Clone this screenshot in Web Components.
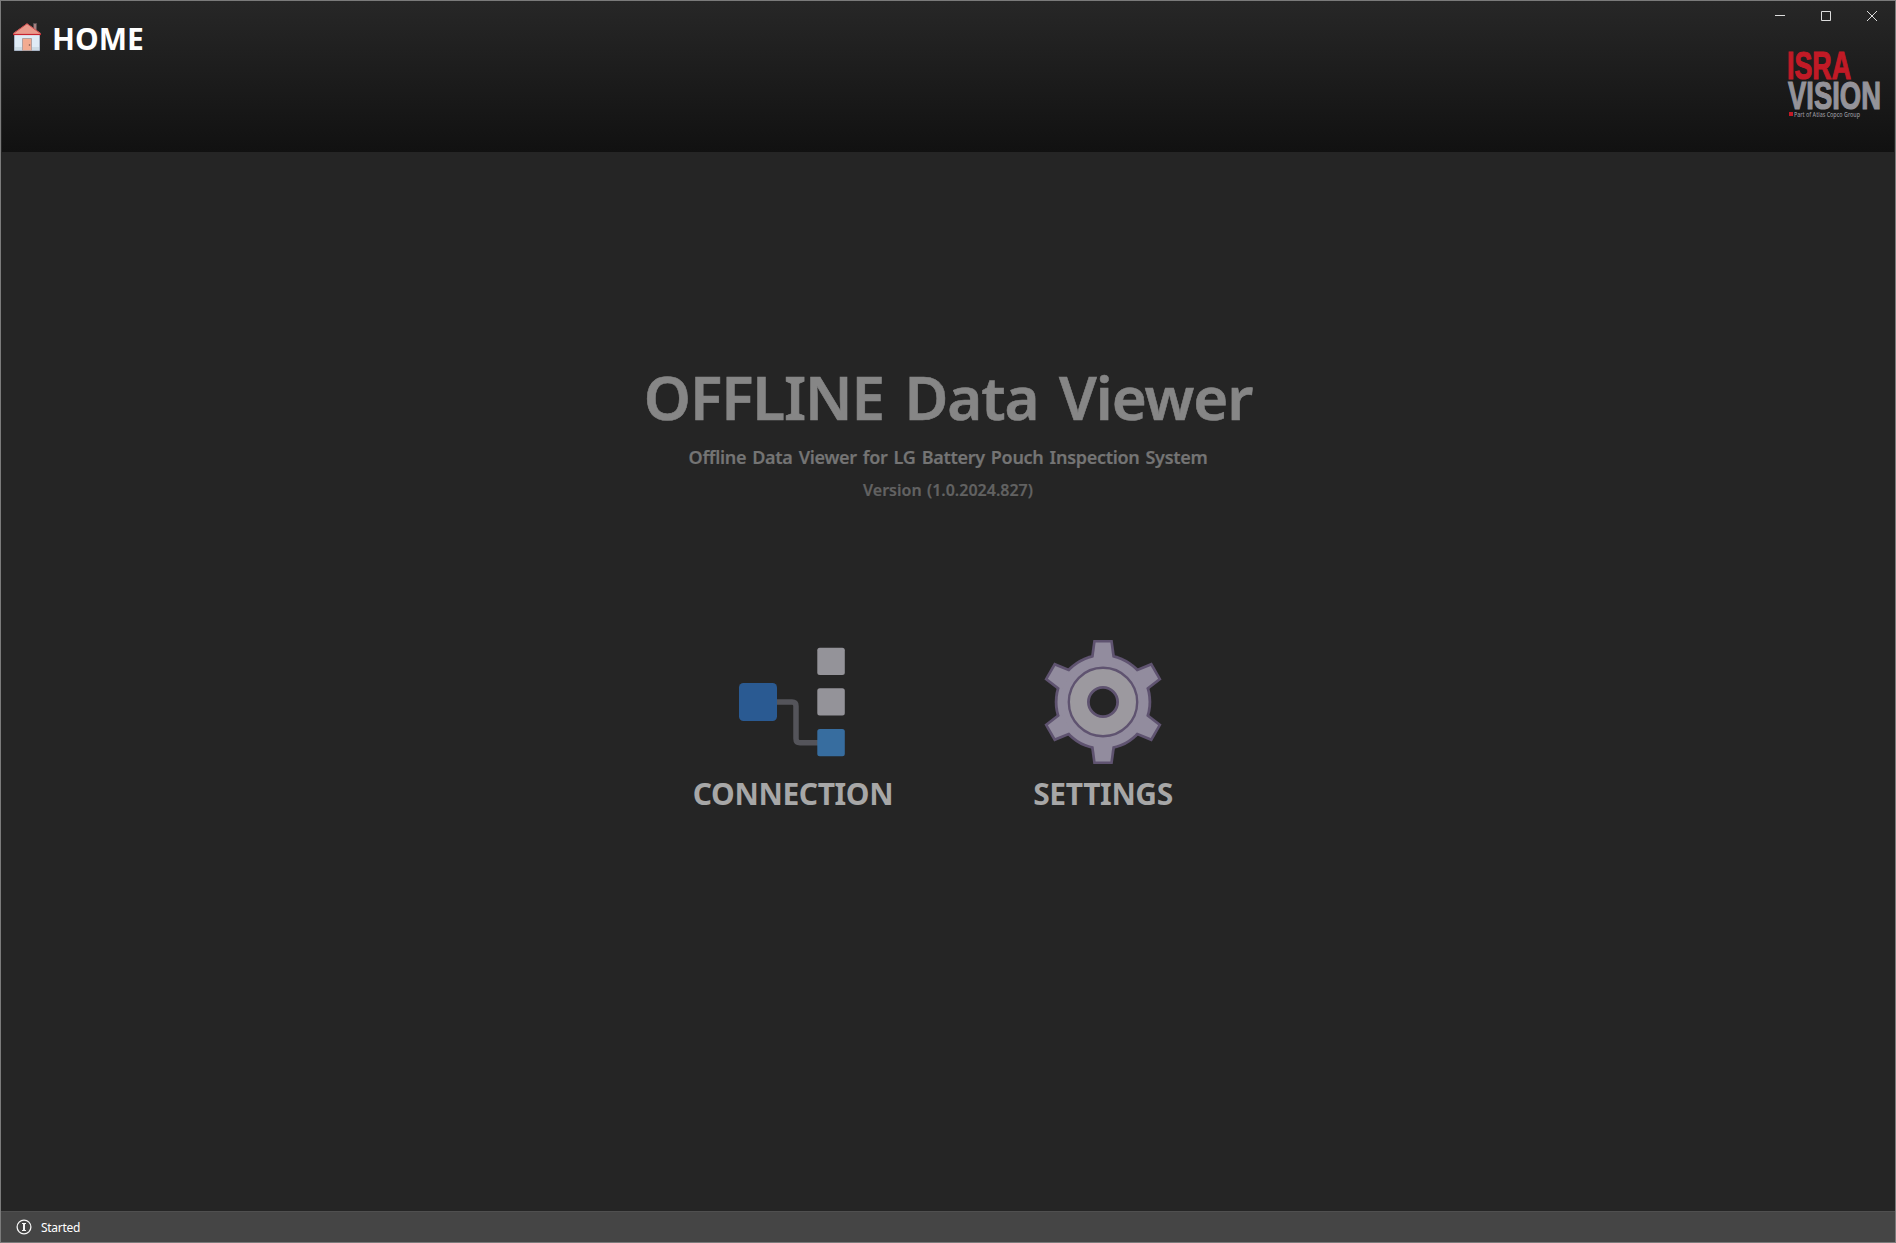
<!DOCTYPE html>
<html lang="en"><head><meta charset="utf-8"><title>OFFLINE Data Viewer</title>
<style>
html,body{margin:0;height:100%;background:#252525}
body{font-family:"Noto Sans","Open Sans",sans-serif;overflow:hidden}
</style></head><body>
<app-window>
  <app-header slot="header" heading="HOME"></app-header>
  <app-intro>
    <span slot="title">OFFLINE Data Viewer</span>
    <span slot="subtitle">Offline Data Viewer for LG Battery Pouch Inspection System</span>
    <span slot="version">Version (1.0.2024.827)</span>
  </app-intro>
  <app-menu>
    <menu-tile><icon-connection slot="icon"></icon-connection>CONNECTION</menu-tile>
    <menu-tile><icon-gear slot="icon"></icon-gear>SETTINGS</menu-tile>
  </app-menu>
  <app-status slot="status">Started</app-status>
</app-window>
<script>
const define=(name,html)=>customElements.define(name,class extends HTMLElement{
  constructor(){super();const t=document.createElement('template');t.innerHTML=html;
    this.attachShadow({mode:'open'}).appendChild(t.content.cloneNode(true));}
  connectedCallback(){const h=this.shadowRoot.querySelector('[data-heading]');
    if(h)h.textContent=this.getAttribute('heading')||'';}
});
define('icon-home',`<style>:host{display:block;width:30px;height:30px}svg{display:block}</style>
<svg width="30" height="30" viewBox="0 0 30 30">
<path d="M21.500 8V1.500h3V11" fill="#a57f7f" stroke="#5d5254"/>
<path d="M2.500 12h25v16.500h-25z" fill="#dfebf5" stroke="#a9b5c6"/>
<path d="M3 25h24v3H3z" fill="#ccdbe4"/>
<path d="M10.500 28.500V16.500h9v12z" fill="#f3ab90" stroke="#b3a09f"/>
<circle cx="17.500" cy="23" r=".8" fill="#77564f"/>
<path d="M1.500 12.500V11L15 1.500 28.500 11v1.500z" fill="#e99a8c"/>
<path d="M1.500 11.500 15 1.700l13.500 9.800" fill="none" stroke="#c9494b"/>
<path d="M1 12.500h28" stroke="#c8232f" stroke-width="1.200"/></svg>`);
define('window-controls',`<style>:host{display:flex;gap:36px;height:10px}svg{display:block}</style>
<svg width="10" height="10"><path d="M0 4.500h10" stroke="#dcdcdc"/></svg>
<svg width="10" height="10"><path d="M.5.5h9v9h-9z" fill="none" stroke="#dcdcdc"/></svg>
<svg width="10" height="10"><path d="M0 0l10 10M10 0L0 10" stroke="#dcdcdc"/></svg>`);
define('brand-logo',`<style>:host{display:block;width:96px;height:68px}svg{display:block;overflow:visible}
text{font-family:"Liberation Sans Narrow","Liberation Sans",sans-serif;font-weight:700}
.s{font-family:"Noto Sans",sans-serif;font-weight:500}</style>
<svg width="96" height="68" viewBox="0 0 96 68">
<text x="-1" y="27.500" font-size="39" textLength="64" lengthAdjust="spacingAndGlyphs" fill="#c11a26" stroke="#c11a26" stroke-width="1.200">ISRA</text>
<text x="0" y="57.500" font-size="39" textLength="93" lengthAdjust="spacingAndGlyphs" fill="#949399" stroke="#949399" stroke-width="1.200">VISION</text>
<path d="M1 61h4v4H1z" fill="#c11a26"/>
<text class="s" x="6" y="65.500" font-size="6.200" textLength="66" lengthAdjust="spacingAndGlyphs" fill="#949399">Part of Atlas Copco Group</text></svg>`);
define('app-header',`<style>:host{display:flex;justify-content:space-between;height:151px;box-sizing:border-box;margin:0 1px;background:linear-gradient(#272727,#111)}
.l{display:flex;gap:10px;padding:21px 0 0 10px;align-items:flex-start}
.h{font-weight:700;font-size:30px;line-height:34px;color:#fff}
.r{display:flex;flex-direction:column;align-items:flex-end;padding-top:10px}
window-controls{margin-right:17px}brand-logo{margin:30px 10px 0 0}</style>
<div class="l"><icon-home></icon-home><div class="h" data-heading></div></div>
<div class="r"><window-controls></window-controls><brand-logo></brand-logo></div>`);
define('app-intro',`<style>:host{display:flex;flex-direction:column;align-items:center;font-weight:600;white-space:nowrap}
.t{margin-top:205px;font-size:60px;line-height:80px;letter-spacing:-1.1px;word-spacing:6px;color:#868686;-webkit-text-stroke:.6px #868686}
.s{margin-top:8px;font-size:18px;line-height:24px;letter-spacing:-.3px;word-spacing:1.700px;color:#747474;-webkit-text-stroke:.2px #747474}
.v{margin-top:9px;font-size:16px;line-height:24px;word-spacing:1.200px;color:#626262;-webkit-text-stroke:.2px #626262}</style>
<div class="t"><slot name="title"></slot></div><div class="s"><slot name="subtitle"></slot></div><div class="v"><slot name="version"></slot></div>`);
define('app-menu',`<style>:host{display:flex;justify-content:center;gap:108px;margin-top:136px}</style><slot></slot>`);
define('menu-tile',`<style>:host{display:flex;flex-direction:column;align-items:center;width:202px}
.n{margin-top:8px;font-weight:700;font-size:30px;line-height:40px;letter-spacing:-.4px;color:#a7a7a7}</style><slot name="icon"></slot><div class="n"><slot></slot></div>`);
define('icon-connection',`<style>:host{display:block}svg{display:block}</style>
<svg width="128" height="128" viewBox="0 0 128 128">
<path d="M47 64h16q4 0 4 4v32.700q0 4 4 4h18" fill="none" stroke="#54545a" stroke-width="5.500"/>
<rect x="10" y="45" width="38" height="38" rx="4.500" fill="#2a5a92"/>
<g fill="#949399"><rect x="88.300" y="9.700" width="27.500" height="27.300" rx="2.500"/><rect x="88.300" y="50.300" width="27.500" height="27.300" rx="2.500"/></g>
<rect x="88.300" y="91" width="27.500" height="27.300" rx="2.500" fill="#376d9f"/></svg>`);
define('icon-gear',`<style>:host{display:block}svg{display:block}</style>
<svg width="128" height="128" viewBox="-64 -64 128 128">
<defs><path id="o" d="M-12.500-42 -9.700-62H9.700L12.500-42z"/><path id="i" d="M-9.700-42 -7.400-59.400H7.400L9.700-42z"/></defs>
<g fill="#5f5370"><circle r="48.300"/><use href="#o"/><use href="#o" transform="rotate(60)"/><use href="#o" transform="rotate(120)"/><use href="#o" transform="rotate(180)"/><use href="#o" transform="rotate(240)"/><use href="#o" transform="rotate(300)"/></g>
<g fill="#928c9e"><circle r="45.500"/><use href="#i"/><use href="#i" transform="rotate(60)"/><use href="#i" transform="rotate(120)"/><use href="#i" transform="rotate(180)"/><use href="#i" transform="rotate(240)"/><use href="#i" transform="rotate(300)"/></g>
<circle r="34.200" fill="#9c999f" stroke="#5f5370" stroke-width="2.400"/>
<circle r="14.600" fill="#252525" stroke="#5f5370" stroke-width="2.800"/></svg>`);
define('app-status',`<style>:host{display:flex;align-items:center;gap:9px;box-sizing:border-box;height:31px;padding:0 0 0 15px;background:#454545;border-top:1px solid #4f4f4f;color:#fff;font-size:12px;line-height:16px;letter-spacing:-.3px}svg{display:block}span{padding-top:1px}</style>
<svg width="16" height="16" viewBox="0 0 16 16" fill="none" stroke="#f4f4f4"><circle cx="8" cy="8" r="6.900" stroke-width="1.300"/><path d="M8 4.500v7" stroke-width="2"/><path d="M6 4.500h4M6 11.500h4"/></svg><span><slot></slot></span>`);
define('app-window',`<style>:host{display:flex;flex-direction:column;box-sizing:border-box;height:1243px;width:1896px;border:1px solid #7b7b7b;background:#252525}
main{flex:1;display:flex;flex-direction:column}</style><slot name="header"></slot><main><slot></slot></main><slot name="status"></slot>`);
</script></body></html>
